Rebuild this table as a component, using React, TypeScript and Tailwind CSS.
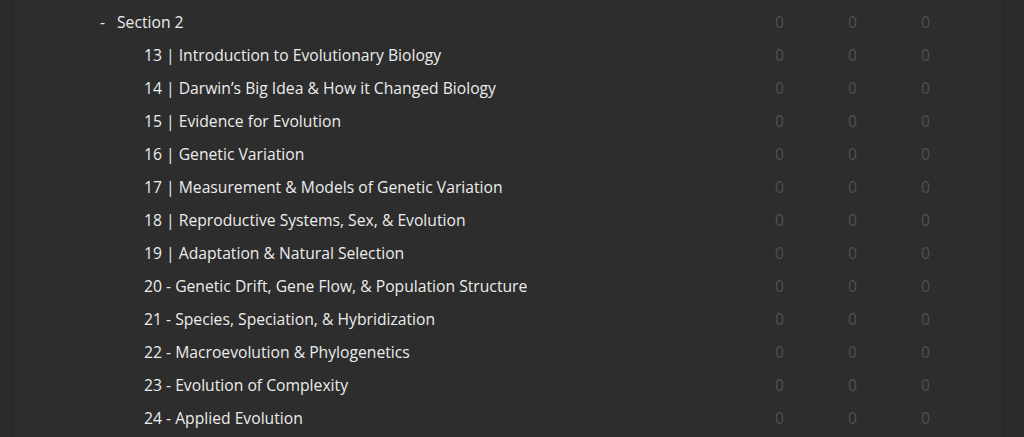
import React from 'react';

const items = [
  '13 | Introduction to Evolutionary Biology',
  '14 | Darwin’s Big Idea & How it Changed Biology',
  '15 | Evidence for Evolution',
  '16 | Genetic Variation',
  '17 | Measurement & Models of Genetic Variation',
  '18 | Reproductive Systems, Sex, & Evolution',
  '19 | Adaptation & Natural Selection',
  '20 - Genetic Drift, Gene Flow, & Population Structure',
  '21 - Species, Speciation, & Hybridization',
  '22 - Macroevolution & Phylogenetics',
  '23 - Evolution of Complexity',
  '24 - Applied Evolution',
];

const Counts = () => (
  <>
    <div className="w-[73px] text-center text-[#505050]">0</div>
    <div className="w-[73px] text-center text-[#505050]">0</div>
    <div className="w-[73px] text-center text-[#505050]">0</div>
  </>
);

export default function App() {
  return (
    <div
      className="flex h-[437px] w-[1024px] overflow-hidden bg-[#2d2d2d] text-[15.7px] text-[#ececec]"
      style={{ fontFamily: '"Segoe UI", "Open Sans", sans-serif' }}
    >
      <div className="w-[14px] shrink-0 border-r border-[#262626] bg-[#2a2a2a]" />
      <div className="flex-1 pt-[6px]">
        <div className="flex h-[33px] items-center pr-[40px]">
          <div className="flex flex-1 items-center pl-[86px]">
            <span className="w-[17px]">-</span>
            <span>Section 2</span>
          </div>
          <Counts />
        </div>
        {items.map((t) => (
          <div key={t} className="flex h-[33px] items-center pr-[40px]">
            <div className="flex-1 pl-[130px]">{t}</div>
            <Counts />
          </div>
        ))}
      </div>
      <div className="w-[22px] shrink-0 border-l border-[#262626] bg-[#2a2a2a]" />
    </div>
  );
}
